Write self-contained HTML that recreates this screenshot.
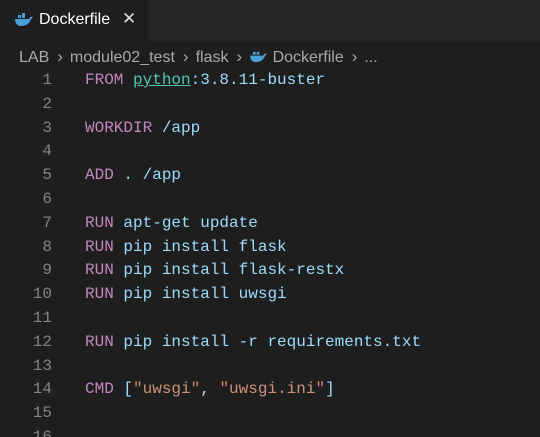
<!DOCTYPE html><html><head><style>
html,body{margin:0;width:540px;height:437px;overflow:hidden}
body{background:#1e1e1e;font-family:"Liberation Sans",sans-serif;position:relative}
.tabs{height:41px;background:#252526;position:relative}
.tab{position:absolute;left:0;top:0;width:148px;height:41px;background:#1e1e1e;color:#fff;font-size:16px}
.tab span{position:absolute;left:39px;top:11px}
.x{position:absolute;left:122px;top:9px;font-size:17px;color:#ddd}
.bc{position:absolute;top:47px;left:19px;color:#a9a9a9;font-size:16px;white-space:pre}
.bc i{font-style:normal;margin:0 7px 0 8px;font-size:17px}
.code{position:absolute;top:69px;left:0;width:540px;height:368px;overflow:hidden;font-family:"Liberation Mono",monospace;font-size:16px}
.l{height:23.8px;line-height:23.8px;white-space:pre;position:relative}
.n{position:absolute;left:0;width:52px;color:#858585;text-align:right}
.c{position:absolute;left:85px;color:#9cdcfe}
.k{color:#c586c0}.s{color:#ce9178}.g{color:#4ec9b0;text-decoration:underline}.w{color:#d4d4d4}
</style></head><body>
<div class="tabs"><div class="tab"><svg style="position:absolute;left:14px;top:13px" width="20" height="14" viewBox="0 0 20 14"><path d="M1 6h14c1-2 3-3 4-2-1 1-1 2-2 2-1 5-6 7-10 7C3 13 1 10 1 6z" fill="#4a9fd8"/><rect x="4" y="2" width="3" height="3" fill="#4a9fd8"/><rect x="8" y="2" width="3" height="3" fill="#4a9fd8"/><rect x="8" y="0" width="3" height="2" fill="#4a9fd8"/></svg><span>Dockerfile</span><div class="x">✕</div></div></div>
<div class="bc">LAB<i>›</i>module02_test<i>›</i>flask<i>›</i><svg width="19" height="13" viewBox="0 0 20 14" style="vertical-align:-1px"><path d="M1 6h14c1-2 3-3 4-2-1 1-1 2-2 2-1 5-6 7-10 7C3 13 1 10 1 6z" fill="#4a9fd8"/><rect x="4" y="2" width="3" height="3" fill="#4a9fd8"/><rect x="8" y="2" width="3" height="3" fill="#4a9fd8"/></svg> Dockerfile<i>›</i>...</div>
<div class="code">
<div class="l"><span class="n">1</span><span class="c"><span class="k">FROM</span> <span class="g">python</span>:3.8.11-buster</span></div>
<div class="l"><span class="n">2</span></div>
<div class="l"><span class="n">3</span><span class="c"><span class="k">WORKDIR</span> /app</span></div>
<div class="l"><span class="n">4</span></div>
<div class="l"><span class="n">5</span><span class="c"><span class="k">ADD</span> . /app</span></div>
<div class="l"><span class="n">6</span></div>
<div class="l"><span class="n">7</span><span class="c"><span class="k">RUN</span> apt-get update</span></div>
<div class="l"><span class="n">8</span><span class="c"><span class="k">RUN</span> pip install flask</span></div>
<div class="l"><span class="n">9</span><span class="c"><span class="k">RUN</span> pip install flask-restx</span></div>
<div class="l"><span class="n">10</span><span class="c"><span class="k">RUN</span> pip install uwsgi</span></div>
<div class="l"><span class="n">11</span></div>
<div class="l"><span class="n">12</span><span class="c"><span class="k">RUN</span> pip install -r requirements.txt</span></div>
<div class="l"><span class="n">13</span></div>
<div class="l"><span class="n">14</span><span class="c"><span class="k">CMD</span> [<span class="s">"uwsgi"</span><span class="w">,</span> <span class="s">"uwsgi.ini"</span>]</span></div>
<div class="l"><span class="n">15</span></div>
<div class="l"><span class="n">16</span></div>
</div>
</body></html>
